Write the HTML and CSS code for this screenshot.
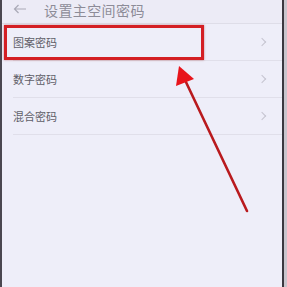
FILE: index.html
```html
<!DOCTYPE html>
<html lang="zh">
<head>
    <meta charset="UTF-8">
    <meta name="viewport" content="width=device-width, initial-scale=1.0">
    <title>设置主空间密码</title>
    <link rel="stylesheet" href="styles.css">
</head>
<body>
    <main class="phone">
        <header class="top-bar">
            <svg class="back" width="14" height="10" viewBox="0 0 14 10">
                <path d="M13 5H1.5M5.5 1L1.5 5L5.5 9" fill="none" stroke="#a9a9b6" stroke-width="1.2"/>
            </svg>
            <h1>设置主空间密码</h1>
        </header>
        <ul class="options">
            <li class="option"><span>图案密码</span><i class="chev"></i></li>
            <li class="option"><span>数字密码</span><i class="chev"></i></li>
            <li class="option"><span>混合密码</span><i class="chev"></i></li>
        </ul>

        <div class="highlight"></div>
        <svg class="pointer" width="287" height="287" viewBox="0 0 287 287">
            <line x1="247" y1="211" x2="185" y2="80" stroke="#b91a1e" stroke-width="2.6" stroke-linecap="round"/>
            <polygon points="179,66 176,86 194,79" fill="#e8141b"/>
        </svg>
    </main>
    <div class="edge"></div>
</body>
</html>
```
FILE: styles.css
```css
html,
body {
    margin: 0;
    padding: 0;
}
body {
    display: flex;
    width: 287px;
    height: 287px;
    overflow: hidden;
    background: #d9d6de;
    font-family: "Noto Sans CJK SC", "Noto Sans", sans-serif;
}
.phone {
    position: relative;
    flex: 0 0 284px;
    height: 287px;
    background: #eeeef9;
    border-left: 2px solid #4a4750;
    border-right: 2px solid #3b3840;
    box-sizing: border-box;
}
.edge {
    flex: 1;
    background: #c9c5cd;
}
.top-bar {
    display: flex;
    align-items: flex-start;
    height: 23px;
    padding-left: 11px;
    border-bottom: 1px solid #dedde8;
    background: #ecebf6;
}
.back {
    margin: 4px 17px 0 0;
}
.top-bar h1 {
    margin: 0;
    font-size: 14px;
    line-height: 20px;
    font-weight: normal;
    color: #8d8c98;
    letter-spacing: 0.4px;
}
.options {
    list-style: none;
    margin: 0;
    padding: 0 0 0 11px;
}
.option {
    display: flex;
    align-items: center;
    justify-content: space-between;
    height: 36px;
    padding-right: 17px;
    border-bottom: 1px solid #e0dfea;
    font-size: 11px;
    color: #5f5e68;
}
.chev {
    width: 5px;
    height: 5px;
    border-top: 1px solid #c5c4cf;
    border-right: 1px solid #c5c4cf;
    transform: rotate(45deg);
}
.highlight {
    position: absolute;
    left: 2px;
    top: 25px;
    width: 200px;
    height: 35px;
    border: 3px solid #d41f24;
    box-sizing: border-box;
    box-shadow: 0 0 2px rgba(150, 20, 20, .5);
}
.pointer {
    position: absolute;
    left: -2px;
    top: 0;
}
```
